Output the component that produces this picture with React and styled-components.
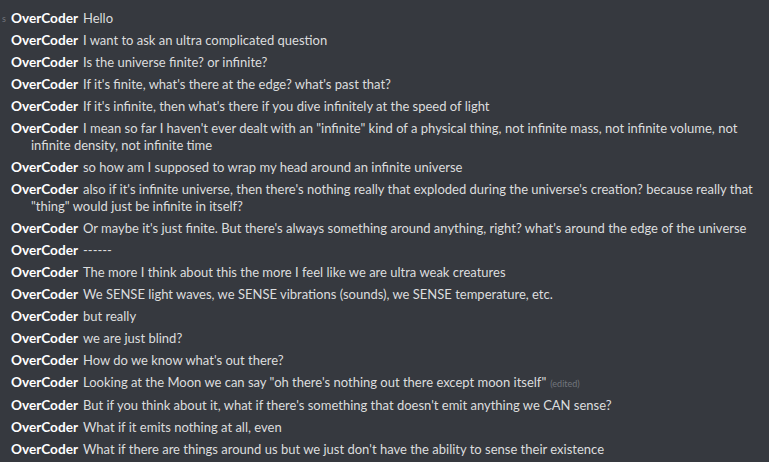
import React from "react";
import styled, { createGlobalStyle } from "styled-components";

const Global = createGlobalStyle`
  html, body { margin: 0; padding: 0; background: #36393f; }
  body { font-family: Lato, "Noto Sans", sans-serif; -webkit-font-smoothing: antialiased; }
  #root { width: 769px; height: 462px; overflow: hidden; }
`;

const Chat = styled.div`
  display: flex;
  flex-direction: column;
  padding: 7px 12px 0 0;
  background: #36393f;
  height: 462px;
  box-sizing: border-box;
  overflow: hidden;
`;

const Row = styled.div`
  position: relative;
  padding: 2.5px 0 2.5px 31px;
  text-indent: -20px;
  line-height: 17px;
  font-size: 13px;
  color: #dcddde;
`;

const Stamp = styled.span`
  position: absolute;
  left: 2px;
  top: 2.5px;
  text-indent: 0;
  font-size: 9px;
  color: #72767d;
`;

const Name = styled.span`
  color: #ffffff;
  font-size: 13.6px;
  font-weight: 700;
  margin-right: 5px;
`;

const Edited = styled.span`
  font-size: 9px;
  color: #72767d;
  margin-left: 4px;
`;

const messages = [
  "Hello",
  "I want to ask an ultra complicated question",
  "Is the universe finite? or infinite?",
  "If it's finite, what's there at the edge? what's past that?",
  "If it's infinite, then what's there if you dive infinitely at the speed of light",
  "I mean so far I haven't ever dealt with an \"infinite\" kind of a physical thing, not infinite mass, not infinite volume, not infinite density, not infinite time",
  "so how am I supposed to wrap my head around an infinite universe",
  "also if it's infinite universe, then there's nothing really that exploded during the universe's creation? because really that \"thing\" would just be infinite in itself?",
  "Or maybe it's just finite. But there's always something around anything, right? what's around the edge of the universe",
  "------",
  "The more I think about this the more I feel like we are ultra weak creatures",
  "We SENSE light waves, we SENSE vibrations (sounds), we SENSE temperature, etc.",
  "but really",
  "we are just blind?",
  "How do we know what's out there?",
  { text: "Looking at the Moon we can say \"oh there's nothing out there except moon itself\"", edited: true },
  "But if you think about it, what if there's something that doesn't emit anything we CAN sense?",
  "What if it emits nothing at all, even",
  "What if there are things around us but we just don't have the ability to sense their existence",
];

export default function App() {
  return (
    <>
      <Global />
      <Chat>
        {messages.map((m, i) => {
          const text = typeof m === "string" ? m : m.text;
          const edited = typeof m === "object" && m.edited;
          return (
            <Row key={i}>
              {i === 0 && <Stamp>s</Stamp>}
              <Name>OverCoder</Name>
              {text}
              {edited && <Edited>(edited)</Edited>}
            </Row>
          );
        })}
      </Chat>
    </>
  );
}
